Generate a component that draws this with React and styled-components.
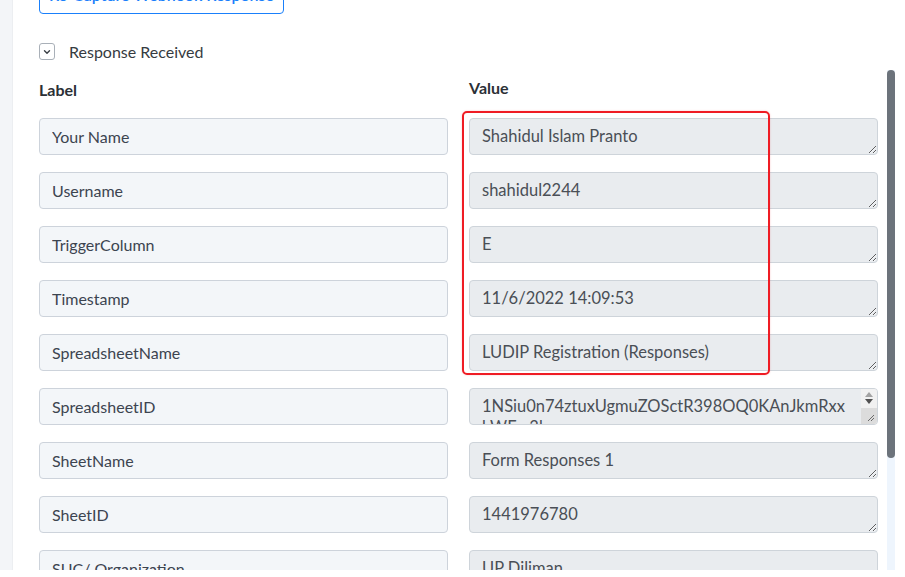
import React, { useLayoutEffect, useRef } from "react";
import styled, { createGlobalStyle } from "styled-components";

const GlobalStyle = createGlobalStyle`
  * { box-sizing: border-box; }
  html, body { margin: 0; background: #fff; }
  body { font-family: Lato, "Open Sans", sans-serif; }
`;

const fields = [
  { label: "Your Name", value: "Shahidul Islam Pranto" },
  { label: "Username", value: "shahidul2244" },
  { label: "TriggerColumn", value: "E" },
  { label: "Timestamp", value: "11/6/2022 14:09:53" },
  { label: "SpreadsheetName", value: "LUDIP Registration (Responses)" },
  { label: "SpreadsheetID", value: "1NSiu0n74ztuxUgmuZOSctR398OQ0KAnJkmRxxkWEw3k", overflow: true },
  { label: "SheetName", value: "Form Responses 1" },
  { label: "SheetID", value: "1441976780" },
  { label: "SUC/ Organization", value: "UP Diliman" },
  { label: "Email Address", value: "pranto@example.com" },
  { label: "Contact Number", value: "09171234567" },
];

const ChevronDown = () => (
  <svg width="10" height="10" viewBox="0 0 10 10" fill="none">
    <path d="M2.5 3.8 5 6.3 7.5 3.8" stroke="#3a3f45" strokeWidth="1.4" strokeLinecap="round" strokeLinejoin="round" />
  </svg>
);

const Grip = () => (
  <svg width="8" height="8" viewBox="0 0 8 8">
    <path d="M7 1 1 7M7 4 4 7" stroke="#6b6b6b" strokeWidth="1" />
  </svg>
);

// small native-looking scrollbar for a textarea whose text runs past its height
const MiniScroll = () => (
  <MiniBar>
    <MiniArrow $up>
      <svg width="8" height="5" viewBox="0 0 8 5">
        <path d="M0 5 4 0 8 5Z" fill="#a3a3a3" />
      </svg>
    </MiniArrow>
    <MiniArrow>
      <svg width="8" height="5" viewBox="0 0 8 5">
        <path d="M0 0 4 5 8 0Z" fill="#505050" />
      </svg>
    </MiniArrow>
    <MiniCorner>
      <Grip />
    </MiniCorner>
  </MiniBar>
);

const App = () => {
  const scrollRef = useRef(null);

  useLayoutEffect(() => {
    if (scrollRef.current) scrollRef.current.scrollTop = 103;
  }, []);

  return (
    <>
      <GlobalStyle />
      <Page>
        <Rail />
        <Panel>
          <ScrollArea ref={scrollRef}>
            <Inner>
              <OutlineButton>Re-Capture Webhook Response</OutlineButton>
              <Toggle>
                <ToggleBox>
                  <ChevronDown />
                </ToggleBox>
                <span>Response Received</span>
              </Toggle>
              <MapGrid>
                <HeadCell $lift={0}>Label</HeadCell>
                <HeadCell $lift={2}>Value</HeadCell>
                {fields.map((f) => (
                  <React.Fragment key={f.label}>
                    <LabelInput readOnly value={f.label} />
                    <ValueCell>
                      <ValueArea readOnly value={f.value} $overflow={f.overflow} />
                      {f.overflow && <MiniScroll />}
                    </ValueCell>
                  </React.Fragment>
                ))}
                <Highlight />
              </MapGrid>
            </Inner>
          </ScrollArea>
          <Track>
            <Thumb />
          </Track>
        </Panel>
      </Page>
    </>
  );
};

const Page = styled.div`
  display: flex;
  height: 570px;
  width: 895px;
`;

const Rail = styled.div`
  width: 13px;
  flex-shrink: 0;
  background: #f3f5f8;
  box-shadow: inset -1px 0 1px rgba(0, 0, 0, 0.03);
`;

const Panel = styled.div`
  flex: 1;
  display: flex;
  height: 570px;
  background: #fff;
`;

const ScrollArea = styled.div`
  flex: 1;
  height: 100%;
  overflow: hidden;
`;

const Track = styled.div`
  width: 8px;
  flex-shrink: 0;
  background: linear-gradient(#fff 0 70px, #eef5fd 70px);
`;

const Thumb = styled.div`
  margin-top: 70px;
  height: 388px;
  border-radius: 4px;
  background: #6c737b;
`;

const Inner = styled.div`
  padding: 79px 9px 39px 26px;
`;

const OutlineButton = styled.button`
  display: block;
  width: 245px;
  height: 38px;
  border: 1px solid #1a80fb;
  border-radius: 4px;
  background: #fff;
  color: #1a80fb;
  font-family: Lato, sans-serif;
  font-size: 16px;
  font-weight: 600;
  padding-top: 0;
`;

const Toggle = styled.div`
  display: flex;
  align-items: center;
  gap: 14px;
  margin-top: 29px;
  height: 17px;
  font-size: 16px;
  color: #363b41;
`;

const ToggleBox = styled.span`
  display: flex;
  align-items: center;
  justify-content: center;
  width: 16px;
  height: 17px;
  border: 1px solid #a9b0b8;
  border-radius: 3px;
`;

const MapGrid = styled.div`
  position: relative;
  display: grid;
  grid-template-columns: 409px 409px;
  column-gap: 21px;
  row-gap: 17px;
  margin-top: 18px;
`;

const HeadCell = styled.div`
  font-size: 16px;
  font-weight: 700;
  line-height: 20px;
  color: #2b3036;
  margin-top: ${(p) => 2 - p.$lift}px;
  margin-bottom: ${(p) => p.$lift + 1}px;
`;

const LabelInput = styled.input`
  height: 37px;
  width: 100%;
  padding: 0 12px;
  border: 1px solid #cdd3db;
  border-radius: 4px;
  background: #f3f6f9;
  color: #3c4450;
  font-family: Lato, sans-serif;
  font-size: 16px;
  outline: none;
`;

const ValueCell = styled.div`
  position: relative;
  height: 37px;
`;

const ValueArea = styled.textarea`
  display: block;
  height: 37px;
  width: 100%;
  padding: 7px ${(p) => (p.$overflow ? 30 : 12)}px 7px 12px;
  border: 1px solid #ced4da;
  border-radius: 4px;
  background: #e9ecef;
  color: #4a4f56;
  font-family: Lato, sans-serif;
  font-size: 16.5px;
  line-height: 21px;
  resize: ${(p) => (p.$overflow ? "none" : "vertical")};
  outline: none;
  overflow: hidden;
`;

const MiniBar = styled.div`
  position: absolute;
  top: 1px;
  right: 1px;
  bottom: 1px;
  width: 16px;
  display: flex;
  flex-direction: column;
  background: #f1f1f1;
  border-radius: 0 3px 3px 0;
  overflow: hidden;
`;

const MiniArrow = styled.div`
  height: 9px;
  display: flex;
  justify-content: center;
  align-items: ${(p) => (p.$up ? "flex-end" : "flex-start")};
  padding: ${(p) => (p.$up ? "0 0 1px" : "1px 0 0")};
`;

const MiniCorner = styled.div`
  flex: 1;
  display: flex;
  align-items: flex-end;
  justify-content: flex-end;
  padding: 0 2px 2px 0;
  background: #dcdcdc;
  margin-top: 1px;
`;

const Highlight = styled.div`
  position: absolute;
  left: 423px;
  top: 33px;
  width: 308px;
  height: 264px;
  border: 2px solid #ef1c24;
  border-radius: 5px;
  pointer-events: none;
  box-shadow: 0 0 2px rgba(239, 28, 36, 0.25);
`;

export default App;
